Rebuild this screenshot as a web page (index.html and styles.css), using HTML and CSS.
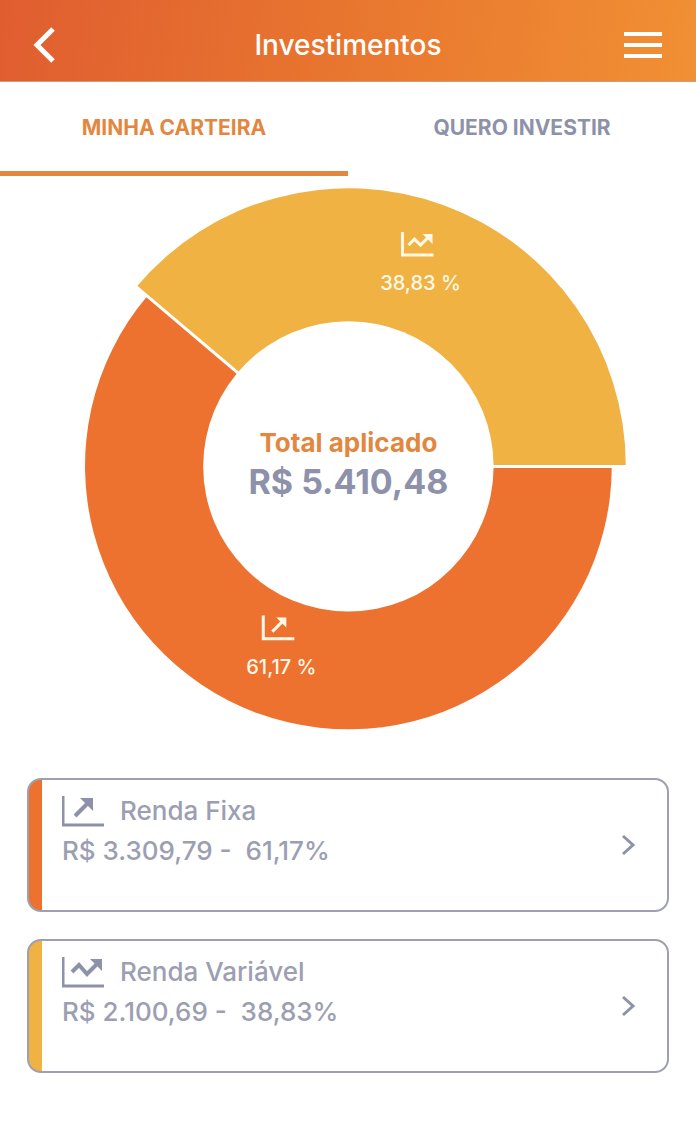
FILE: index.html
```html
<!DOCTYPE html>
<html lang="pt-BR">
<head>
  <meta charset="UTF-8" />
  <meta name="viewport" content="width=device-width, initial-scale=1.0" />
  <title>Investimentos</title>
  <link rel="stylesheet" href="styles.css">
</head>
<body>
  <header class="topbar">
    <button class="icon-btn" type="button" aria-label="Voltar">
      <svg width="24" height="38" viewBox="0 0 24 38"><path d="M21 3 L5 19 L21 35" /></svg>
    </button>
    <h1>Investimentos</h1>
    <button class="icon-btn" type="button" aria-label="Menu">
      <svg class="bars" width="38" height="28" viewBox="0 0 38 28"><path d="M0 3 H38 M0 14 H38 M0 25 H38" /></svg>
    </button>
  </header>

  <nav class="tabs">
    <a class="tab active" href="#carteira">MINHA CARTEIRA</a>
    <a class="tab" href="#investir">QUERO INVESTIR</a>
  </nav>

  <main>
    <svg class="chart" viewBox="-278 -278 556 542" role="img" aria-label="Total aplicado">
      <path class="fixa" d="M263 0 A263 263 0 1 1 -201 -170 L0 0 Z" />
      <path class="variavel" d="M277 0 A277 277 0 0 0 -212 -179 L0 0 Z" />
      <path class="divider" d="M280 0 H0 L-215 -182" />
      <circle class="hole" r="145" />

      <g class="mark" transform="translate(53 -234)">
        <path d="M1 0 V23 H32" />
        <path d="M7 13 L13 7 L19 13 L27 5" />
        <path class="head" d="M21 2 H31 V12 Z" />
      </g>
      <text class="percent" x="72" y="-176">38,83 %</text>

      <g class="mark" transform="translate(-86 149)">
        <path d="M1 0 V23 H32" />
        <path d="M10 16 L21 5" />
        <path class="head" d="M14 2 H24 V12 Z" />
      </g>
      <text class="percent" x="-67" y="207">61,17 %</text>

      <text class="total-label" y="-14">Total aplicado</text>
      <text class="total-value" y="28">R$ 5.410,48</text>
    </svg>

    <div class="cards">
      <a class="card card-fixa" href="#renda-fixa">
        <div class="card-info">
          <div class="card-title">
            <svg width="42" height="32" viewBox="0 0 42 32">
              <path d="M1 1 V30 H42" />
              <path class="arrow" d="M13 21 L27 7" />
              <path class="head" d="M18 3 H31 V16 Z" />
            </svg>
            <span>Renda Fixa</span>
          </div>
          <div class="card-value">R$ 3.309,79 -&nbsp; 61,17%</div>
        </div>
        <svg class="chevron" width="16" height="22" viewBox="0 0 16 22"><path d="M2 2 L12 11 L2 20" /></svg>
      </a>

      <a class="card card-variavel" href="#renda-variavel">
        <div class="card-info">
          <div class="card-title">
            <svg width="42" height="32" viewBox="0 0 42 32">
              <path d="M1 1 V30 H42" />
              <path class="arrow" d="M10 16 L17 9 L25 18 L36 7" />
              <path class="head" d="M28 3 H40 V15 Z" />
            </svg>
            <span>Renda Variável</span>
          </div>
          <div class="card-value">R$ 2.100,69 -&nbsp; 38,83%</div>
        </div>
        <svg class="chevron" width="16" height="22" viewBox="0 0 16 22"><path d="M2 2 L12 11 L2 20" /></svg>
      </a>
    </div>
  </main>
</body>
</html>
```

FILE: styles.css
```css
* {
  box-sizing: border-box;
}

body {
  margin: 0;
  font-family: Inter, 'Liberation Sans', sans-serif;
  background: #fff;
  color: #9294ab;
}

.topbar {
  display: flex;
  align-items: center;
  justify-content: space-between;
  height: 82px;
  padding: 8px 32px 0 32px;
  background: linear-gradient(100deg, #e05d30, #e8762f 50%, #f19034);
  border-bottom: 1px solid #d49a78;
}

.topbar h1 {
  margin: 0;
  font-size: 28px;
  font-weight: 500;
  color: #fff;
}

.icon-btn {
  display: flex;
  width: 40px;
  padding: 0;
  border: none;
  background: none;
  cursor: pointer;
}

.icon-btn svg {
  fill: none;
  stroke: #fff;
  stroke-width: 5;
}

.icon-btn .bars {
  stroke-width: 4;
}

.tabs {
  display: flex;
}

.tab {
  flex: 1;
  height: 94px;
  padding-top: 32px;
  border-bottom: 5px solid transparent;
  font-size: 21px;
  line-height: 28px;
  font-weight: 700;
  text-align: center;
  text-decoration: none;
  color: #8e91aa;
}

.tab.active {
  color: #e3873f;
  border-bottom-color: #e3873f;
}

.chart {
  display: block;
  width: 80%;
  margin: 12px auto 0;
  font-weight: 600;
  text-anchor: middle;
}

.fixa {
  fill: #ed7230;
}

.variavel {
  fill: #f0b243;
}

.divider {
  fill: none;
  stroke: #fff;
  stroke-width: 3;
}

.hole {
  fill: #fff;
}

.mark {
  fill: none;
  stroke: #fff8e6;
  stroke-width: 3;
}

.mark .head {
  fill: #fff8e6;
  stroke: none;
}

.percent {
  font-size: 20px;
  font-weight: 500;
  fill: #fff8e6;
}

.total-label {
  font-size: 26px;
  font-weight: 700;
  fill: #e3873f;
}

.total-value {
  font-size: 34px;
  font-weight: 700;
  fill: #8e91aa;
}

.cards {
  display: flex;
  flex-direction: column;
  gap: 27px;
  padding: 47px 27px;
}

.card {
  display: flex;
  align-items: center;
  justify-content: space-between;
  min-height: 134px;
  padding: 0 30px 0 20px;
  border: 2px solid #9fa0af;
  border-radius: 14px;
  color: #9c9eb2;
  text-decoration: none;
}

.card-fixa {
  background: linear-gradient(to right, #ed7230 13px, #fff 13px);
}

.card-variavel {
  background: linear-gradient(to right, #f0b243 13px, #fff 13px);
}

.card-info {
  align-self: flex-start;
  padding: 11px 0 0 13px;
  font-size: 26px;
  font-weight: 500;
  line-height: 40px;
}

.card-title {
  display: flex;
  align-items: center;
  gap: 16px;
}

.card svg {
  fill: none;
  stroke: #8e91aa;
  stroke-width: 3;
}

.card .arrow {
  stroke-width: 4;
}

.card .head {
  fill: #8e91aa;
  stroke: none;
}
```
